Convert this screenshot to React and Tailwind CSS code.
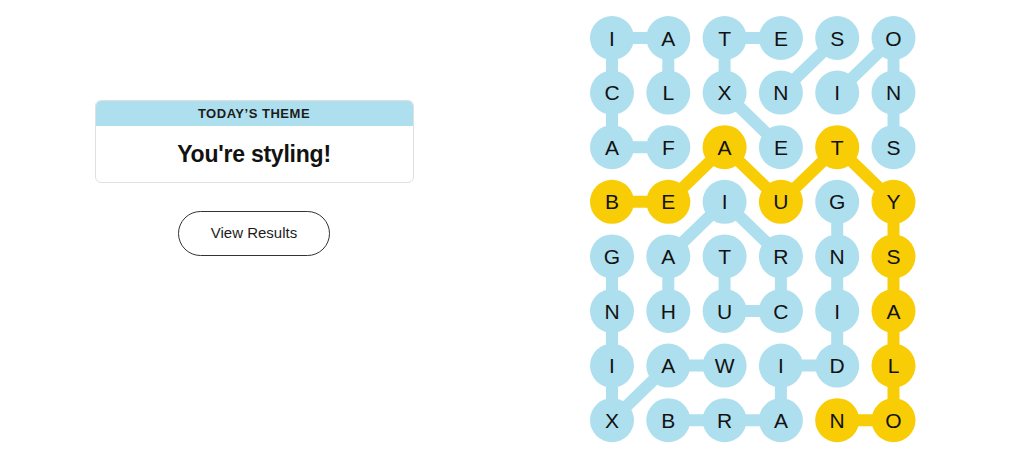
import React from 'react';

const BLUE = '#aedfee';
const YELLOW = '#f8cd05';

const rows = [
  'IATESO',
  'CLXNIN',
  'AFAETS',
  'BEIUGY',
  'GATRNS',
  'NHUCIA',
  'IAWIDL',
  'XBRANO',
];

// cells that belong to the spangram
const gold = new Set(['3,0', '3,1', '2,2', '3,3', '2,4', '3,5', '4,5', '5,5', '6,5', '7,5', '7,4']);

// links between neighbouring cells: [r1, c1, r2, c2]
const blueLinks = [
  [0, 0, 0, 1], [0, 0, 1, 0], [0, 1, 1, 1], [0, 2, 0, 3], [0, 2, 1, 2],
  [0, 4, 1, 3], [0, 5, 1, 4], [0, 5, 1, 5], [1, 0, 2, 0], [1, 2, 2, 3],
  [2, 0, 2, 1], [1, 5, 2, 5],
  [3, 2, 4, 1], [3, 2, 4, 3], [3, 4, 4, 4],
  [4, 0, 5, 0], [4, 1, 5, 1], [4, 2, 5, 2], [4, 3, 5, 3], [4, 4, 5, 4],
  [5, 2, 5, 3], [5, 0, 6, 0], [5, 4, 6, 4],
  [6, 1, 6, 2], [6, 3, 6, 4], [6, 0, 7, 0], [7, 0, 6, 1], [6, 3, 7, 3],
  [7, 1, 7, 2], [7, 2, 7, 3],
];

const goldLinks = [
  [3, 0, 3, 1], [3, 1, 2, 2], [2, 2, 3, 3], [3, 3, 2, 4], [2, 4, 3, 5],
  [3, 5, 4, 5], [4, 5, 5, 5], [5, 5, 6, 5], [6, 5, 7, 5], [7, 5, 7, 4],
];

const cx = (c) => 22 + c * 56.3;
const cy = (r) => 22 + r * 54.6;

const Board = () => (
  <svg width="330" height="430" viewBox="0 0 330 430" className="block">
    {blueLinks.map(([r1, c1, r2, c2], i) => (
      <line key={'b' + i} x1={cx(c1)} y1={cy(r1)} x2={cx(c2)} y2={cy(r2)} stroke={BLUE} strokeWidth="12" />
    ))}
    {goldLinks.map(([r1, c1, r2, c2], i) => (
      <line key={'g' + i} x1={cx(c1)} y1={cy(r1)} x2={cx(c2)} y2={cy(r2)} stroke={YELLOW} strokeWidth="12" />
    ))}
    {rows.map((row, r) =>
      row.split('').map((ch, c) => (
        <g key={r + '-' + c}>
          <circle cx={cx(c)} cy={cy(r)} r="22" fill={gold.has(r + ',' + c) ? YELLOW : BLUE} />
          <text
            x={cx(c)}
            y={cy(r) + 7.5}
            textAnchor="middle"
            fontSize="21"
            fill="#121212"
            style={{ fontFamily: '"Liberation Sans", Arial, sans-serif' }}
          >
            {ch}
          </text>
        </g>
      ))
    )}
  </svg>
);

export default function App() {
  return (
    <div className="w-[1024px] h-[474px] bg-white flex" style={{ fontFamily: '"Liberation Sans", Arial, sans-serif' }}>
      <div className="w-[508px] pt-[100px] flex flex-col items-center">
        <div className="w-[319px] h-[83px] rounded-[6px] border border-[#e0e0e0] overflow-hidden flex flex-col">
          <div className="h-[25px] bg-[#aedfee] flex items-center justify-center text-[13px] font-bold tracking-[0.04em] text-[#1c1c1c]">
            TODAY’S THEME
          </div>
          <div className="flex-1 flex items-center justify-center text-[23px] font-bold text-[#121212] tracking-[-0.01em]">
            You're styling!
          </div>
        </div>
        <button className="mt-[28px] w-[152px] h-[45px] rounded-full border border-[#333] text-[15px] text-[#1c1c1c] bg-white">
          View Results
        </button>
      </div>
      <div className="ml-[82px] pt-[16px]">
        <Board />
      </div>
    </div>
  );
}
